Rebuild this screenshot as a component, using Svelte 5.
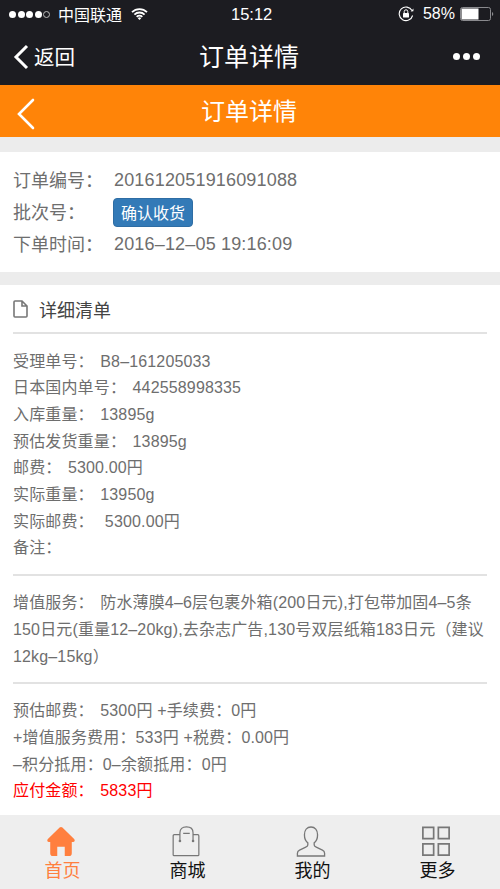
<script>
	let order = [
		['受理单号：', 'B8–161205033'],
		['日本国内单号：', '442558998335'],
		['入库重量：', '13895g'],
		['预估发货重量：', '13895g'],
		['邮费：', '5300.00円'],
		['实际重量：', '13950g'],
		['实际邮费：', ' 5300.00円'],
		['备注：', '']
	];
	let tabs = ['首页', '商城', '我的', '更多'];
</script>

<div class="page">
	<div class="wechat">
		<div class="status">
			<div class="left">
				<span class="sig"><i></i><i></i><i></i><i></i><i class="off"></i></span>
				<span class="carrier">中国联通</span>
				<svg class="wifi" width="17" height="12" viewBox="0 0 17 12">
					<path d="M1 4.2a10.6 10.6 0 0 1 15 0M3.4 6.6a7.2 7.2 0 0 1 10.2 0M5.7 8.8a3.9 3.9 0 0 1 5.6 0" fill="none" stroke="#fff" stroke-width="1.8"/>
					<path d="M8.5 12l-1.7-1.8a2.4 2.4 0 0 1 3.4 0z" fill="#fff"/>
				</svg>
			</div>
			<div class="time">15:12</div>
			<div class="right">
				<svg width="16" height="16" viewBox="0 0 16 16">
					<path d="M14.6 9.5A6.8 6.8 0 1 1 14 4.6" fill="none" stroke="#fff" stroke-width="1.1"/>
					<path d="M12.6 5.4l2.8-.2.1-2.6z" fill="#fff"/>
					<rect x="5" y="7" width="6" height="4.6" rx=".6" fill="#fff"/>
					<path d="M6.2 7V5.6a1.8 1.8 0 0 1 3.6 0V7" fill="none" stroke="#fff"/>
				</svg>
				<span class="pct">58%</span>
				<svg width="35" height="14" viewBox="0 0 35 14">
					<rect x=".5" y=".5" width="30" height="13" rx="2" fill="none" stroke="#8a8a8e"/>
					<rect x="1.5" y="1.5" width="17" height="11" fill="#fff"/>
					<path d="M32 5a2.2 2.2 0 0 1 0 4z" fill="#8a8a8e"/>
				</svg>
			</div>
		</div>
		<div class="wx-nav">
			<svg class="wx-back" width="16" height="26" viewBox="0 0 16 26"><path d="M14 2L3 13l11 11" fill="none" stroke="#fff" stroke-width="3"/></svg>
			<span class="wx-return">返回</span>
			<span class="wx-title">订单详情</span>
			<span class="wx-more"><i></i><i></i><i></i></span>
		</div>
	</div>

	<div class="header">
		<svg class="head-back" width="20" height="32" viewBox="0 0 20 32"><path d="M17 2L3 16l14 14" fill="none" stroke="#fff" stroke-width="2.600" stroke-linecap="round"/></svg>
		<span class="head-title">订单详情</span>
	</div>

	<div class="content">
		<section class="info">
			<div class="info-row"><span class="lab">订单编号：</span><span class="num">201612051916091088</span></div>
			<div class="info-row"><span class="lab">批次号：</span><button type="button" class="btn">确认收货</button></div>
			<div class="info-row"><span class="lab">下单时间：</span><span class="num">2016–12–05 19:16:09</span></div>
		</section>

		<section class="detail">
			<div class="detail-head">
				<svg width="15" height="18" viewBox="0 0 15 18"><path d="M1 2a1 1 0 0 1 1-1h7l5 5v10a1 1 0 0 1-1 1H2a1 1 0 0 1-1-1zM9 1v5h5" fill="none" stroke="#777" stroke-width="1.6"/></svg>
				<span>详细清单</span>
			</div>
			<div class="block">
				{#each order as [k, v]}
					<div class="line"><span class="key">{k}</span>{v}</div>
				{/each}
			</div>
			<div class="block">
				<div class="line"><span class="key">增值服务：</span>防水薄膜4–6层包裹外箱(200日元),打包带加固4–5条</div>
				<div class="line">150日元(重量12–20kg),去杂志广告,130号双层纸箱183日元（建议</div>
				<div class="line">12kg–15kg）</div>
			</div>
			<div class="block last">
				<div class="line"><span class="key">预估邮费：</span>5300円 +手续费：0円</div>
				<div class="line">+增值服务费用：533円 +税费：0.00円</div>
				<div class="line">–积分抵用：0–余额抵用：0円</div>
				<div class="line red"><span class="key">应付金额：</span>5833円</div>
			</div>
		</section>
	</div>

	<nav class="tabs">
		{#each tabs as t, i}
			<div class="tab" class:active={i == 0}>
				<svg width="30" height="31" viewBox="0 0 32 32" preserveAspectRatio="none">
					{#if i == 0}
						<path d="M16 1c.6 0 1 .2 1.500.6L30 13.500c1.300 1.300.6 3-1.200 3H27.500V28c0 1.800-1 3-2.700 3H20v-9.500h-8V31H7.200c-1.700 0-2.700-1.200-2.700-3V16.500H3.200c-1.800 0-2.500-1.700-1.200-3L14.500 1.600c.5-.4.900-.6 1.500-.6z" fill="#ff7f3e"/>
					{:else if i == 1}
						<path d="M9 9H3.500a1.200 1.200 0 0 0-1.200 1.200v19.500a1 1 0 0 0 1 1h25.400a1 1 0 0 0 1-1V10.200a1.200 1.200 0 0 0-1.200-1.200H24M9.500 15V7C9.500 3 12 1 16.500 1s7 2 7 6v8M13 7.500h7" fill="none" stroke="#777" stroke-width="1.300"/>
						<circle cx="9.500" cy="15.500" r="1.400" fill="#777"/><circle cx="23.500" cy="15.500" r="1.400" fill="#777"/>
					{:else if i == 2}
						<path d="M16 1c-4.300 0-7 3.400-7 8 0 3.600 1.400 6.800 3.600 8.400v2.300c0 1-1 1.700-2.200 2.200L3.800 25c-1.500.7-2.300 1.800-2.300 3.200V31h29v-2.800c0-1.400-.8-2.500-2.300-3.200l-6.600-3.100c-1.200-.5-2.200-1.200-2.200-2.200v-2.300C21.600 15.800 23 12.600 23 9c0-4.600-2.700-8-7-8z" fill="none" stroke="#777" stroke-width="1.400"/>
					{:else}
						<path d="M2 1.500h11.500V13H2zM18.500 1.500H30V13H18.500zM2 18.500h11.500V30H2zM18.500 18.500H30V30H18.500z" fill="none" stroke="#777" stroke-width="1.800"/>
					{/if}
				</svg>
				<span>{t}</span>
			</div>
		{/each}
	</nav>
</div>

<style>
	:global(body) {
		margin: 0;
	}
	.page {
		width: 500px;
		height: 889px;
		display: flex;
		flex-direction: column;
		overflow: hidden;
		background: #ececec;
		font-family: "Liberation Sans", "Noto Sans CJK SC", sans-serif;
		color: #6e6e6e;
	}
	.wechat {
		height: 85px;
		background: #1c1c21;
		color: #fff;
		flex: none;
	}
	.status {
		height: 28px;
		display: flex;
		align-items: center;
		justify-content: space-between;
		padding: 0 5px 0 9px;
		position: relative;
	}
	.left, .right {
		display: flex;
		align-items: center;
	}
	.sig {
		display: flex;
		gap: 1.500px;
	}
	.sig i {
		width: 7px;
		height: 7px;
		border-radius: 50%;
		background: #fff;
		box-sizing: border-box;
	}
	.sig i.off {
		background: none;
		border: 1px solid #bbb;
	}
	.carrier {
		font-size: 16px;
		margin-left: 8px;
	}
	.wifi {
		margin-left: 9px;
	}
	.time {
		position: absolute;
		left: 231px;
		font-size: 16.500px;
	}
	.pct {
		font-size: 16px;
		margin: 0 5px 0 9px;
	}
	.wx-nav {
		height: 57px;
		display: flex;
		align-items: center;
		padding: 0 20px 0 13px;
		position: relative;
	}
	.wx-return {
		font-size: 20.500px;
		margin-left: 5px;
		margin-bottom: 2px;
	}
	.wx-title {
		position: absolute;
		left: 199px;
		font-size: 25px;
		margin-bottom: 4px;
	}
	.wx-more {
		margin-left: auto;
		display: flex;
		gap: 3px;
	}
	.wx-more i {
		width: 7px;
		height: 7px;
		border-radius: 50%;
		background: #fff;
	}
	.header {
		height: 52px;
		flex: none;
		background: #ff8408;
		display: flex;
		align-items: center;
		padding-left: 16px;
		position: relative;
	}
	.head-back {
		margin-top: 5px;
	}
	.head-title {
		position: absolute;
		left: 201px;
		font-size: 24px;
		color: #fff;
		margin-bottom: 4px;
	}
	.content {
		flex: 1;
		padding-top: 15px;
		display: flex;
		flex-direction: column;
		gap: 13px;
		min-height: 0;
	}
	.info, .detail {
		background: #fff;
	}
	.info {
		height: 120px;
		box-sizing: border-box;
		padding: 12px 13px;
		font-size: 18px;
	}
	.info-row {
		height: 32px;
		display: flex;
		align-items: center;
	}
	.lab {
		width: 100px;
		flex: none;
		margin-top: -2px;
	}
	.num {
		margin-left: 1px;
		letter-spacing: 0.170px;
	}
	.btn {
		width: 80px;
		height: 29px;
		padding: 0;
		background: #337ab7;
		border: 1px solid #2e6da4;
		border-radius: 4px;
		color: #fff;
		font: inherit;
		font-size: 16px;
	}
	.detail {
		flex: 1;
		padding: 0 13px;
	}
	.detail-head {
		height: 47px;
		display: flex;
		align-items: center;
		gap: 11px;
		font-size: 18px;
		color: #444;
	}
	.block {
		border-top: 2px solid #e2e2e2;
		padding: 14.500px 0 11.500px;
	}
	.block.last {
		padding-bottom: 0;
	}
	.line {
		font-size: 16px;
		line-height: 26.700px;
		letter-spacing: 0.150px;
	}
	.key {
		display: inline-block;
		margin-right: 6.500px;
	}
	.red {
		color: #f00;
	}
	.tabs {
		height: 74px;
		flex: none;
		display: flex;
		background: #eee;
	}
	.tab {
		flex: 1;
		display: flex;
		flex-direction: column;
		align-items: center;
		padding-top: 11px;
		font-size: 18px;
		line-height: 26px;
		color: #111;
	}
	.tab svg {
		margin: 0 4px 1px 0;
	}
	.tab.active {
		color: #ff7f3e;
	}
</style>
